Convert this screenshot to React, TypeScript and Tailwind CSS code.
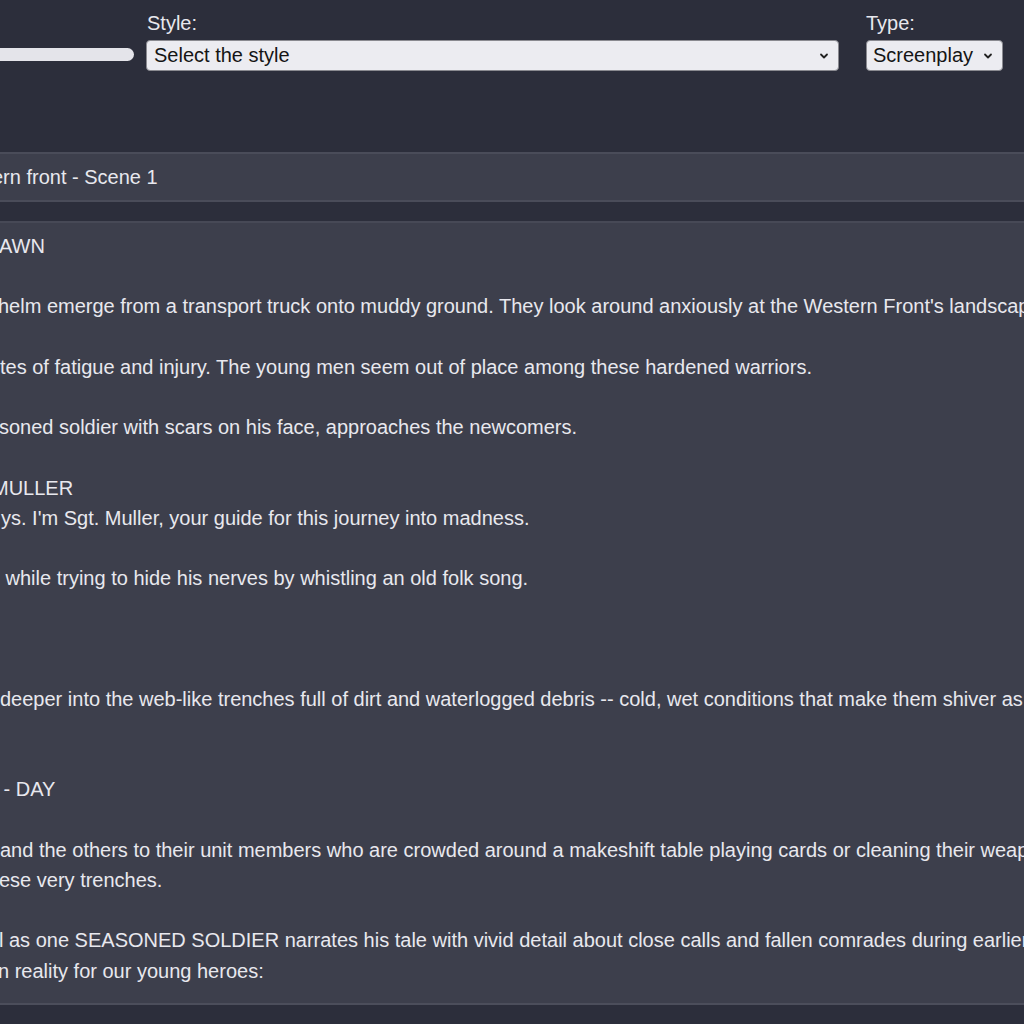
import React from "react";

const Chevron = () => (
  <svg width="12" height="12" viewBox="0 0 12 12" fill="none" stroke="#222" strokeWidth="1.8" strokeLinecap="round" strokeLinejoin="round">
    <path d="M3 4.5 L6 7.5 L9 4.5" />
  </svg>
);

const lines: { t: string; ml?: number }[] = [
  { t: "AWN", ml: -1 },
  { t: "" },
  { t: "helm emerge from a transport truck onto muddy ground. They look around anxiously at the Western Front's landscape", ml: -2 },
  { t: "" },
  { t: "tes of fatigue and injury. The young men seem out of place among these hardened warriors.", ml: 0 },
  { t: "" },
  { t: "soned soldier with scars on his face, approaches the newcomers.", ml: -1 },
  { t: "" },
  { t: "MULLER", ml: -8 },
  { t: "ys. I'm Sgt. Muller, your guide for this journey into madness.", ml: 1 },
  { t: "" },
  { t: "\u00a0while trying to hide his nerves by whistling an old folk song.", ml: 0 },
  { t: "" },
  { t: "" },
  { t: "" },
  { t: "deeper into the web-like trenches full of dirt and waterlogged debris -- cold, wet conditions that make them shiver as they", ml: 0 },
  { t: "" },
  { t: "" },
  { t: "\u00a0- DAY", ml: -2 },
  { t: "" },
  { t: "and the others to their unit members who are crowded around a makeshift table playing cards or cleaning their weapons", ml: 0 },
  { t: "ese very trenches.", ml: -1 },
  { t: "" },
  { t: "l as one SEASONED SOLDIER narrates his tale with vivid detail about close calls and fallen comrades during earlier", ml: -1 },
  { t: "n reality for our young heroes:", ml: -2 },
];

export default function App() {
  return (
    <div
      className="w-[1024px] h-[1024px] overflow-hidden bg-[#2c2e3b] text-[#e8e8ee]"
      style={{ fontFamily: '"Liberation Sans", Arial, sans-serif' }}
    >
      {/* top controls */}
      <div className="flex items-end pt-[10px] h-[71px]">
        <div className="w-[134px] h-[13px] mb-[10px] bg-[#e4e4ea] rounded-r-full" />
        <div className="ml-[12px] flex flex-col">
          <div className="text-[20px] leading-[24px] pl-[1px]">Style:</div>
          <div className="mt-[5px] w-[693px] h-[31px] bg-[#ececf1] border border-[#8a8a90] rounded-[4px] flex items-center justify-between pl-[7px] pr-[8px] text-[#151515] text-[20px] leading-[24px]">
            <span className="-mt-[2px]">Select the style</span>
            <Chevron />
          </div>
        </div>
        <div className="ml-[27px] flex flex-col">
          <div className="text-[20px] leading-[24px] pl-[0px]">Type:</div>
          <div className="mt-[5px] w-[137px] h-[31px] bg-[#ececf1] border border-[#8a8a90] rounded-[4px] flex items-center justify-between pl-[6px] pr-[8px] text-[#151515] text-[20px] leading-[24px]">
            <span className="-mt-[2px]">Screenplay</span>
            <Chevron />
          </div>
        </div>
      </div>

      {/* title box */}
      <div className="mt-[81px] border-t-2 border-[#4a4c59] bg-[#3d3f4c]">
        <div className="h-[46px] flex items-center text-[20px] ml-[-8px]">ern front - Scene 1</div>
        <div className="h-[2px] bg-[#4a4c59]" />
      </div>

      {/* content box */}
      <div className="mt-[19px] border-t-2 border-[#474956] bg-[#3d3f4c] pt-[8px] pb-[17px]">
        {lines.map((l, i) => (
          <div
            key={i}
            className="h-[30.2px] leading-[30px] text-[20px] whitespace-nowrap"
            style={{ marginLeft: l.ml ?? 0 }}
          >
            {l.t}
          </div>
        ))}
      </div>
      <div className="h-[2px] bg-[#4c4e5b]" />
    </div>
  );
}
